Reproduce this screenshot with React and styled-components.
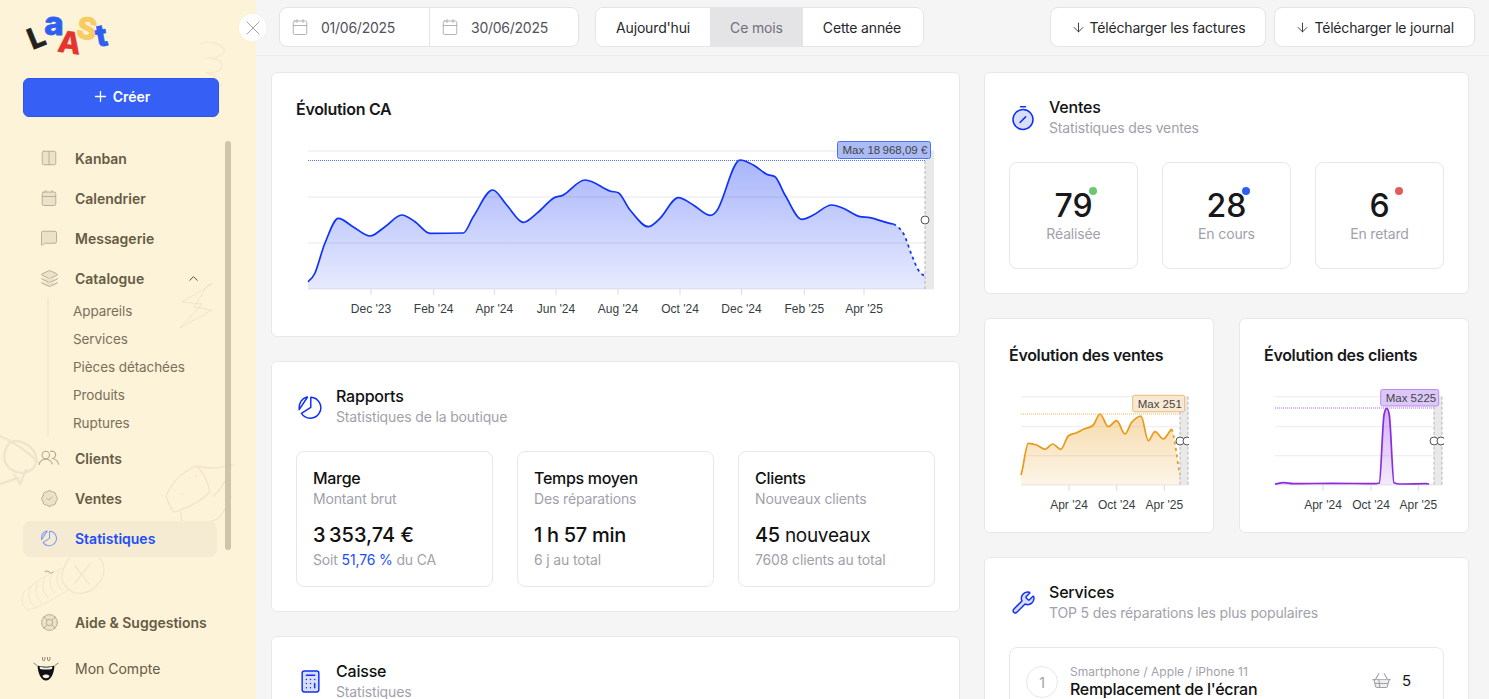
import React from "react";
import styled, { createGlobalStyle } from "styled-components";
import {
  ArrowDown, Calendar, ChevronUp, Columns2, Layers, LifeBuoy, MessageSquare,
  Plus, ShoppingBasket, X, Wrench, Calculator, BadgeCheck,
} from "lucide-react";

const Global = createGlobalStyle`
  html, body, #root { height: 100%; margin: 0; }
  body { font-family: Inter, "Noto Sans", sans-serif; background: #f5f5f5; color: #111; letter-spacing: -.15px; -webkit-font-smoothing: antialiased; }
  * { box-sizing: border-box; }
`;

const Shell = styled.div`display: flex; height: 100vh; overflow: hidden;`;

/* ---------- sidebar ---------- */
const Sidebar = styled.aside`
  position: relative; flex: none; width: 256px; padding-left: 23px;
  background: #fdf3d9; display: flex; flex-direction: column;
`;
const Doodles = styled.svg`position: absolute; inset: 0; width: 256px; height: 699px; pointer-events: none;`;
const LogoBox = styled.div`position: relative; height: 78px;`;
const LogoSvg = styled.svg`display: block; width: 110px; height: 60px; margin: 5px 0 0 -11px; overflow: visible;`;
const CreateButton = styled.button`
  position: relative; flex: none; width: 196px; height: 39px; padding: 0 0 2px; border-radius: 6px; border: 1px solid #2c55ec;
  background: #355ff5; color: #fff; font: 600 14px Inter, sans-serif;
  display: flex; align-items: center; justify-content: center; gap: 4px;
`;
const Nav = styled.nav`
  position: relative; flex: none; width: 194px; height: 433px; margin-top: 24px; overflow: hidden;
  display: flex; flex-direction: column; gap: 4px;
`;
const Item = styled.a`
  flex: none; height: 36px; padding: 0 0 2px 16px; border-radius: 8px; display: flex; align-items: center; gap: 16px;
  font-size: 14px; letter-spacing: 0; font-weight: ${p => (p.$light ? 400 : 600)};
  color: ${p => (p.$active ? "#1d4dfa" : "#665b44")};
  background: ${p => (p.$active ? "#f5ead2" : "transparent")};
`;
const IconSlot = styled.span`
  flex: none; width: 20px; height: 20px; display: flex; align-items: center; justify-content: center; color: #b5a98f;
  svg { flex: none; }
`;
const Chevron = styled.span`margin-left: auto; margin-right: 16px; display: flex; color: #5a5039;`;
const SubList = styled.div`
  margin: 0 0 0 24px; padding-left: 24px; border-left: 2px solid #f6ebd0; display: flex; flex-direction: column;
`;
const SubItem = styled.a`height: 28px; line-height: 28px; font-size: 13.5px; letter-spacing: -.08px; color: #7b705a; white-space: nowrap;`;
const Group = styled.div`flex: none;`;
const Foot = styled.div`position: relative; width: 194px; margin-top: 31px; display: flex; flex-direction: column; gap: 10px;`;
const Thumb = styled.div`position: absolute; left: 225px; top: 141px; width: 6px; height: 409px; border-radius: 3px; background: #cfc5ae;`;
const CloseButton = styled.button`
  position: absolute; right: -10px; top: 14px; width: 27px; height: 27px; border: 0; border-radius: 50%; padding: 0;
  background: #fff; color: #a1a1aa; display: flex; align-items: center; justify-content: center; z-index: 2;
`;

/* ---------- main ---------- */
const Main = styled.div`flex: 1; min-width: 0; display: flex; flex-direction: column;`;
const TopBar = styled.header`
  flex: none; height: 56px; padding: 7px 14px 0 23px; display: flex; align-items: flex-start; gap: 16px;
  border-bottom: 1px solid #ebebeb;
`;
const Group40 = styled.div`
  display: flex; height: 40px; background: #fff; border: 1px solid #e4e4e7; border-radius: 8px; overflow: hidden;
`;
const DateField = styled.div`
  width: ${p => p.$w}px; display: flex; align-items: center; gap: 12px; padding-left: 11px; font-size: 14px; color: #52525b;
  letter-spacing: -.25px; & + & { border-left: 1px solid #e4e4e7; }
  svg { color: #a1a1aa; }
`;
const Seg = styled.div`
  padding: 0 20px; display: flex; align-items: center; font-size: 14px;
  color: ${p => (p.$on ? "#71717a" : "#27272a")}; background: ${p => (p.$on ? "#e4e4e7" : "#fff")};
  &:last-child { padding-right: 21.500px; }
`;
const Actions = styled.div`margin-left: auto; display: flex; gap: 8px;`;
const ToolButton = styled.button`
  height: 40px; padding: 0 20px; background: #fff; border: 1px solid #e4e4e7; border-radius: 8px; color: #27272a;
  font: 400 14px Inter, sans-serif; letter-spacing: -.17px; display: flex; align-items: center; gap: 4px;
`;
const Content = styled.main`
  flex: 1; min-height: 0; overflow: hidden; padding: 16px 20px 0 15px; display: grid;
  grid-template-columns: 689px 485px; gap: 24px; align-items: start;
`;
const Column = styled.div`display: flex; flex-direction: column; gap: 24px;`;
const Card = styled.section`
  background: #fff; border: 1px solid #e8e8e8; border-radius: 6px; padding: 24px; 
`;
const ChartCard = styled(Card)`padding-bottom: 16px; min-width: 0;`;
const ChartTitle = styled.h2`margin: 0; font-size: 16px; line-height: 24px; font-weight: 600; letter-spacing: -.3px; color: #18181b; white-space: nowrap;`;
const ChartSvg = styled.svg`display: block; margin-top: ${p => p.$mt}px; overflow: hidden; letter-spacing: 0;`;
const CardHead = styled.div`display: flex; align-items: center; gap: 12px;`;
const HeadIcon = styled.span`flex: none; width: 28px; display: flex; justify-content: center; color: #0f2ff8;`;
const HeadTitle = styled.div`font-size: 16px; line-height: 20px; font-weight: 500; letter-spacing: -.2px; color: #111;`;
const HeadSub = styled.div`margin-top: 1px; font-size: 14px; line-height: 20px; color: #a1a1aa;`;
const Row3 = styled.div`margin-top: 24px; display: grid; grid-template-columns: repeat(3, 1fr); gap: 24px;`;
const Tile = styled.div`border: 1px solid #e8e8e8; border-radius: 8px; padding: 16px;`;
const TileTitle = styled.div`font-size: 16px; line-height: 20px; font-weight: 500; letter-spacing: -.3px; color: #111;`;
const Muted = styled.div`font-size: 14px; line-height: 20px; margin-top: 1px; color: #a1a1aa;`;
const TileValue = styled.div`
  height: 28px; margin-top: 12px; font-size: 20px; line-height: 28px; font-weight: 500; letter-spacing: -.3px; color: #111;
  span { font-size: 19px; line-height: 1; font-weight: 400; }
`;
const Blue = styled.span`color: #1d4dfa;`;
const StatTile = styled.div`
  position: relative; height: 107px; border: 1px solid #e8e8e8; border-radius: 8px; padding-top: 23px; text-align: center;
`;
const StatNumber = styled.div`font-size: 32px; line-height: 40px; font-weight: 500; letter-spacing: 0; color: #18181b;`;
const StatLabel = styled.div`margin-top: -2px; font-size: 14px; line-height: 20px; color: #a1a1aa;`;
const Dot = styled.i`position: absolute; left: 79px; top: 24px; width: 8px; height: 8px; border-radius: 50%; background: ${p => p.$c};`;
const Pair = styled.div`display: grid; grid-template-columns: 230px 230px; column-gap: 25px;`;
const ServiceRow = styled.div`
  margin-top: 24px; border: 1px solid #e8e8e8; border-radius: 8px; padding: 16px; display: flex; align-items: flex-start; gap: 12px;
`;
const Rank = styled.div`
  flex: none; width: 32px; height: 32px; margin-top: 2px; border: 1px solid #e8e8e8; border-radius: 50%;
  display: flex; align-items: center; justify-content: center; font-size: 14px; color: #a1a1aa;
`;
const ServiceMeta = styled.div`font-size: 12px; line-height: 16px; letter-spacing: .05px; color: #a1a1aa;`;
const ServiceName = styled.div`margin-top: -1px; font-size: 16px; line-height: 20px; font-weight: 500; letter-spacing: -.3px; color: #111;`;
const ServiceCount = styled.div`
  margin: 6px 0 0 auto; padding-right: 16px; display: flex; align-items: center; gap: 10px; font-size: 15px; color: #18181b;
  svg { color: #a1a1aa; }
`;

/* ---------- drawings ---------- */
const iconFill = "#ece2ca";

const PieIcon = ({ size = 20, color = "currentColor", fill = "none", sw = 1.4 }) => (
  <svg width={size} height={size} viewBox="0 0 24 24" fill="none" stroke={color} strokeWidth={sw} strokeLinejoin="round" strokeLinecap="round">
    <path d="M2.6 14.4 10.2 3a.4.4 0 0 0-.5-.3C5 4 2 8.6 2.6 14.4Z" fill={fill} transform="translate(-.6 0)" />
    <path d="M12.5 2.6A10 10 0 1 1 3.6 18l8.9-5.6Z" transform="translate(.6 .4) scale(.97)" />
  </svg>
);

const StopwatchIcon = () => (
  <svg width="24" height="26" viewBox="0 0 24 26" fill="none" stroke="currentColor" strokeWidth="1.5" strokeLinecap="round">
    <path d="M9.5 1.8h5" />
    <circle cx="12" cy="14.5" r="10" fill="#d9dffb" />
    <path d="M9 17.5l5.6-5.6" />
  </svg>
);

const TwoHeads = () => (
  <svg width="22" height="20" viewBox="0 0 22 20" fill="none" stroke="currentColor" strokeWidth="1.100" strokeLinecap="round">
    <circle cx="7.800" cy="7" r="3.700" />
    <path d="M1 16.500c1-3.500 3.500-5.300 6.800-5.300 3 0 5.400 1.600 6.500 4.800" />
    <path d="M12.500 3.400a3.700 3.700 0 1 1 1.600 7.100" />
    <path d="M16 11.300c2.300.6 3.900 2.400 4.700 5" />
  </svg>
);

const ClippedGlyph = () => (
  <svg width="20" height="20" viewBox="0 0 20 20" fill="none" stroke="currentColor" strokeWidth="1.100" strokeLinecap="round">
    <path d="M6 4c1.300-1.400 2.700-1.400 4 0s2.700 1.400 4 0" />
  </svg>
);

const Avatar = () => (
  <svg width="28" height="28" viewBox="0 0 28 28" style={{ marginLeft: -6 }}>
    <path d="M1.500 9c1 .4 2 1.300 3.500 2.500M26.500 9c-1 .4-2 1.300-3.500 2.500" fill="none" stroke="#5f5849" strokeWidth=".7" />
    <path d="M10.500 3v2.400a1.200 1.200 0 0 0 2.400 0V3M15.500 3v2.400a1.200 1.200 0 0 0 2.400 0V3" fill="none" stroke="#5f5849" strokeWidth=".7" />
    <path d="M5.500 11.500c4 1.600 13 1.600 17 0-.5 8-3.500 15-8.500 15s-8-7-8.500-15Z" fill="#111" />
    <path d="M7.500 12.800c3.500 1 9.500 1 13 0l-.6 2.200c-3.500.8-8.300.8-11.800 0Z" fill="#eee" />
    <path d="M10.500 22c1.500-2 5.500-2 7 0-.8 3-6.200 3-7 0Z" fill="#f5f1e6" />
  </svg>
);

function smooth(pts) {
  const n = pts.length;
  const slope = (a, b) => (b[1] - a[1]) / (b[0] - a[0]);
  const m = [];
  for (let i = 0; i < n; i++) {
    if (i === 0) m.push(slope(pts[0], pts[1]) * 0.6);
    else if (i === n - 1) m.push(slope(pts[n - 2], pts[n - 1]) * 0.6);
    else {
      const s0 = slope(pts[i - 1], pts[i]), s1 = slope(pts[i], pts[i + 1]);
      if (s0 * s1 <= 0) m.push(0);
      else {
        const c = slope(pts[i - 1], pts[i + 1]);
        const lim = 2.2 * Math.min(Math.abs(s0), Math.abs(s1));
        m.push(Math.sign(c) * Math.min(Math.abs(c), lim));
      }
    }
  }
  let d = `M${pts[0][0]} ${pts[0][1]}`;
  for (let i = 0; i < n - 1; i++) {
    const dx = (pts[i + 1][0] - pts[i][0]) / 3;
    d += `C${pts[i][0] + dx} ${pts[i][1] + m[i] * dx} ${pts[i + 1][0] - dx} ${pts[i + 1][1] - m[i + 1] * dx} ${pts[i + 1][0]} ${pts[i + 1][1]}`;
  }
  return d;
}

function Chart({ id, box, mt, left, right, shadeTo, grid, pts, split, color, tag, maxY, ticks, circles, labelY, dash2 }) {
  const [, , vw, vh] = box;
  const base = grid[grid.length - 1];
  const solid = pts.slice(0, split + 1);
  const dashed = pts.slice(split);
  return (
    <ChartSvg $mt={mt} width={vw} height={vh} viewBox={box.join(" ")}>
      <defs>
        <linearGradient id={id} x1="0" y1="0" x2="0" y2="1">
          <stop offset="0" stopColor={color} stopOpacity=".36" />
          <stop offset="1" stopColor={color} stopOpacity=".1" />
        </linearGradient>
      </defs>
      {grid.map(y => <line key={y} x1={left} x2={shadeTo} y1={y} y2={y} stroke="#efefef" strokeWidth="1.3" />)}
      <rect x={right} y={grid[0]} width={shadeTo - right} height={base - grid[0]} fill="#e9e9e9" />
      <line x1={left} x2={right} y1={maxY} y2={maxY} stroke={color} strokeOpacity=".7" strokeWidth="1" strokeDasharray="1 1" />
      <path d={`${smooth(pts)}L${right} ${base}L${left} ${base}Z`} fill={`url(#${id})`} />
      <path d={smooth(solid)} fill="none" stroke={color} strokeWidth="1.700" />
      <path d={smooth(dashed)} fill="none" stroke={color} strokeWidth="1.700" strokeDasharray="3 3.500" />
      <line x1={right} x2={right} y1={grid[0]} y2={base + 1} stroke="#b5b5b5" strokeWidth="1" strokeDasharray="3 2" />
      {dash2 && <line x1={shadeTo} x2={shadeTo} y1={grid[0]} y2={base + 1} stroke="#b5b5b5" strokeWidth="1" strokeDasharray="3 2" />}
      {ticks.map(([x, t]) => (
        <g key={t}>
          <line x1={x} x2={x} y1={base} y2={base + 6} stroke="#dcdcdc" />
          <text x={x} y={labelY} textAnchor="middle" fontFamily="'Liberation Sans', sans-serif" fontSize="12" fill="#373d3f">{t}</text>
        </g>
      ))}
      <rect x={tag.x} y={tag.y} width={tag.w} height={tag.h} rx="2" fill={tag.fill} stroke={tag.stroke} />
      <text x={tag.x + 5} y={tag.y + tag.h / 2 + 4} fontFamily="'Liberation Sans', sans-serif" fontSize="11.500" fill="#444">{tag.text}</text>
      {circles.map(c => <circle key={c} cx={c} cy={tag.cy} r="4" fill="#fff" stroke="#555" strokeWidth="1" />)}
    </ChartSvg>
  );
}

const caPts = [[308,281.7],[315,273],[325,243],[338.3,218.3],[353,226.7],[370,236],[385,226.7],[401.7,215],[415,221.7],[430,233.3],[463.3,233],[473.3,216.7],[492.7,190],[506.7,205],[523.3,222.3],[536.7,213.3],[553.3,198.3],[563.3,195],[585,180],[610,191],[618.3,192.7],[630,210],[648.3,226.7],[660,218.3],[678.3,197.7],[693.3,205],[710,215.3],[718.3,208.3],[740,160],[753.3,165],[766.7,174.3],[775,176.7],[785,195],[801.7,219.3],[813.3,215],[831.7,205],[843.3,208.3],[860,216.7],[870,217.7],[893.3,224],[903.3,233.3],[911.7,255],[918.3,270],[925,276]];
const z = a => a.map(([x, y]) => [+(1000 + x / 3).toFixed(1), +(340 + y / 3).toFixed(1)]);
const salesPts = z([[63,405],[85,310],[110,315],[135,328],[158,312],[182,328],[205,288],[230,278],[250,268],[280,255],[300,222],[325,260],[350,242],[375,282],[395,247],[423,228],[445,302],[465,275],[490,297],[515,267],[525,310],[540,405]]);
const clientPts = z([[825,432],[850,428],[880,431],[1000,430],[1125,431],[1138,429],[1152,225],[1160,205],[1168,225],[1182,428],[1200,432],[1278,431],[1295,433]]);

const navTop = [
  ["Kanban", <Columns2 size={18} strokeWidth={1.2} fill={iconFill} />],
  ["Calendrier", <Calendar size={18} strokeWidth={1.2} fill={iconFill} />],
  ["Messagerie", <MessageSquare size={18} strokeWidth={1.2} fill={iconFill} />],
];
const subs = ["Appareils", "Services", "Pièces détachées", "Produits", "Ruptures"];

export default function App() {
  return (
    <Shell>
      <Global />
      <Sidebar>
        <Doodles viewBox="0 0 256 699" fill="none" stroke="#f5ead0" strokeWidth="1.300" strokeLinejoin="round" strokeLinecap="round">
          <path d="M200 44c10-4 22 0 24 6s-12 8-16 8 14-1 14 7-14 8-16 8 12 1 12 8-10 9-18 8M198 90c10 2 20 0 24-6" />
          <path d="M212 284l-30 18 20 2-22 24 32-18-18-3 14-22Z" strokeWidth="1" stroke="#f0e4c8" />
          <path d="M0 436c14 6 28 16 38 26M10 442c-8 10-8 22 2 28s22 2 24-8-10-24-26-20ZM14 474l6 10 6-14M0 484c6-2 12-4 18-6" stroke="#efe5cd" strokeWidth="2.400" />
          <path d="M166 496c6-14 16-24 30-30 8 6 12 16 14 26-10 10-22 16-36 20-4-4-6-10-8-16ZM196 466c10 2 22 4 36 -2-4 14-10 24-18 32M181 512c0 6 1 10 2 14 12-2 26-2 36-8 6-8 10-16 12-22M183 494h.01M196 476h.01" stroke="#f0e5cb" />
          <path d="M64 568a22 22 0 0 1 32-14 20 20 0 0 1 2 30c-8 10-22 12-28 6-8-6-10-14-6-22ZM75 566l14 18M90 564l-16 20" stroke="#f2e7cf" />
          <path d="M64 568c-14 4-30 14-40 24M68 590c-12 8-26 16-40 20M24 592c-4 8-2 14 4 18M31 587c-4 8-2 14 3 19M38 582c-4 8-2 14 3 20M45 578c-4 8-2 14 3 20M52 574c-4 8-2 14 3 19M59 571c-4 8-2 14 3 19" stroke="#f2e7cf" strokeWidth="1" />
        </Doodles>
        <LogoBox>
          <LogoSvg viewBox="10 5 110 60" fontFamily="Inter, sans-serif" fontWeight="800" strokeLinejoin="round">
            <text transform="translate(38 47) rotate(-22)" textAnchor="middle" fontSize="29" fill="#222" stroke="#222" strokeWidth=".4">L</text>
            <text x="52" y="35" textAnchor="middle" fontSize="33" fill="#2f5ff0" stroke="#2f5ff0" strokeWidth=".8">a</text>
            <text transform="translate(66 53) rotate(8)" textAnchor="middle" fontSize="30" fill="#e5342f" stroke="#e5342f" strokeWidth=".3">A</text>
            <text transform="translate(83 39) rotate(10)" textAnchor="middle" fontSize="30" fill="#f7cc62" stroke="#f7cc62" strokeWidth=".8">S</text>
            <text transform="translate(101 46) rotate(-10)" textAnchor="middle" fontSize="30" fill="#2f5ff0" stroke="#2f5ff0" strokeWidth=".8">t</text>
          </LogoSvg>
        </LogoBox>
        <CreateButton><Plus size={17} strokeWidth={1.800} />Créer</CreateButton>
        <Nav>
          {navTop.map(([t, ic]) => <Item key={t}><IconSlot>{ic}</IconSlot>{t}</Item>)}
          <Group>
            <Item>
              <IconSlot><Layers size={19} strokeWidth={1.200} fill={iconFill} /></IconSlot>Catalogue
              <Chevron><ChevronUp size={15} strokeWidth={1.600} /></Chevron>
            </Item>
            <SubList>{subs.map(s => <SubItem key={s}>{s}</SubItem>)}</SubList>
          </Group>
          <Item><IconSlot><TwoHeads /></IconSlot>Clients</Item>
          <Item><IconSlot><BadgeCheck size={19} strokeWidth={1.200} fill={iconFill} /></IconSlot>Ventes</Item>
          <Item $active><IconSlot><PieIcon size={18} color="#7f9af5" fill="#cfd6f0" /></IconSlot>Statistiques</Item>
          <Item><IconSlot><ClippedGlyph /></IconSlot></Item>
        </Nav>
        <Foot>
          <Item><IconSlot><LifeBuoy size={19} strokeWidth={1.200} fill={iconFill} /></IconSlot>Aide &amp; Suggestions</Item>
          <Item $light><IconSlot><Avatar /></IconSlot>Mon Compte</Item>
        </Foot>
        <Thumb />
        <CloseButton><X size={24} strokeWidth={1} /></CloseButton>
      </Sidebar>

      <Main>
        <TopBar>
          <Group40>
            <DateField $w={149}><Calendar size={18} strokeWidth={1.100} />01/06/2025</DateField>
            <DateField $w={149}><Calendar size={18} strokeWidth={1.100} />30/06/2025</DateField>
          </Group40>
          <Group40>
            <Seg>Aujourd'hui</Seg>
            <Seg $on>Ce mois</Seg>
            <Seg>Cette année</Seg>
          </Group40>
          <Actions>
            <ToolButton><ArrowDown size={15} strokeWidth={1.400} />Télécharger les factures</ToolButton>
            <ToolButton><ArrowDown size={15} strokeWidth={1.400} />Télécharger le journal</ToolButton>
          </Actions>
        </TopBar>

        <Content>
          <Column>
            <ChartCard>
              <ChartTitle>Évolution CA</ChartTitle>
              <Chart
                id="ca" box={[296, 140, 640, 180]} mt={19} left={308} right={925} shadeTo={934}
                grid={[151, 197, 243, 289]} pts={caPts} split={39} color="#1033f5" maxY={160.5} labelY={313}
                ticks={[[371,"Dec '23"],[433.7,"Feb '24"],[494.3,"Apr '24"],[556,"Jun '24"],[618,"Aug '24"],[680,"Oct '24"],[741.5,"Dec '24"],[804.3,"Feb '25"],[864,"Apr '25"]]}
                tag={{ x: 837.5, y: 141.5, w: 93, h: 17, fill: "#aabbf5", stroke: "#4f72ee", text: "Max 18\u202f968,09 €", cy: 220 }}
                circles={[925]}
              />
            </ChartCard>

            <Card>
              <CardHead>
                <HeadIcon><PieIcon size={26} /></HeadIcon>
                <div><HeadTitle>Rapports</HeadTitle><HeadSub>Statistiques de la boutique</HeadSub></div>
              </CardHead>
              <Row3>
                <Tile>
                  <TileTitle>Marge</TileTitle><Muted>Montant brut</Muted>
                  <TileValue>3{"\u202f"}353,74 €</TileValue>
                  <Muted>Soit <Blue>51,76 %</Blue> du CA</Muted>
                </Tile>
                <Tile>
                  <TileTitle>Temps moyen</TileTitle><Muted>Des réparations</Muted>
                  <TileValue>1 h 57 min</TileValue>
                  <Muted>6 j au total</Muted>
                </Tile>
                <Tile>
                  <TileTitle>Clients</TileTitle><Muted>Nouveaux clients</Muted>
                  <TileValue>45 <span>nouveaux</span></TileValue>
                  <Muted>7608 clients au total</Muted>
                </Tile>
              </Row3>
            </Card>

            <Card>
              <CardHead>
                <HeadIcon><Calculator size={25} strokeWidth={1.400} fill="#d9dffb" /></HeadIcon>
                <div><HeadTitle>Caisse</HeadTitle><HeadSub>Statistiques</HeadSub></div>
              </CardHead>
            </Card>
          </Column>

          <Column>
            <Card>
              <CardHead>
                <HeadIcon><StopwatchIcon /></HeadIcon>
                <div><HeadTitle>Ventes</HeadTitle><HeadSub>Statistiques des ventes</HeadSub></div>
              </CardHead>
              <Row3>
                <StatTile><Dot $c="#6cc76f" /><StatNumber>79</StatNumber><StatLabel>Réalisée</StatLabel></StatTile>
                <StatTile><Dot $c="#2f5ef5" /><StatNumber>28</StatNumber><StatLabel>En cours</StatLabel></StatTile>
                <StatTile><Dot $c="#e25c5c" /><StatNumber>6</StatNumber><StatLabel>En retard</StatLabel></StatTile>
              </Row3>
            </Card>

            <Pair>
              <ChartCard>
                <ChartTitle>Évolution des ventes</ChartTitle>
                <Chart
                  id="sales" box={[1009, 385, 180, 131]} mt={18} left={1021} right={1180} shadeTo={1188} dash2
                  grid={[396.7, 426.7, 455.7, 485]} pts={salesPts} split={19} color="#e89a18" maxY={414} labelY={509}
                  ticks={[[1069,"Apr '24"],[1116.7,"Oct '24"],[1164.3,"Apr '25"]]}
                  tag={{ x: 1132.7, y: 395.3, w: 52, h: 16.500, fill: "#f9e9d2", stroke: "#ecb97a", text: "Max 251", cy: 441 }}
                  circles={[1180, 1187]}
                />
              </ChartCard>
              <ChartCard>
                <ChartTitle>Évolution des clients</ChartTitle>
                <Chart
                  id="clients" box={[1264, 385, 180, 131]} mt={18} left={1275} right={1434} shadeTo={1442} dash2
                  grid={[396.7, 426.7, 455.7, 485]} pts={clientPts} split={11} color="#8a2be2" maxY={408} labelY={509}
                  ticks={[[1323,"Apr '24"],[1371,"Oct '24"],[1418.300,"Apr '25"]]}
                  tag={{ x: 1380.700, y: 389.500, w: 58, h: 16.500, fill: "#dcc8f8", stroke: "#b98af0", text: "Max 5225", cy: 441 }}
                  circles={[1434, 1441]}
                />
              </ChartCard>
            </Pair>

            <Card>
              <CardHead>
                <HeadIcon><Wrench size={25} strokeWidth={1.400} fill="#d9dffb" /></HeadIcon>
                <div><HeadTitle>Services</HeadTitle><HeadSub>TOP 5 des réparations les plus populaires</HeadSub></div>
              </CardHead>
              <ServiceRow>
                <Rank>1</Rank>
                <div>
                  <ServiceMeta>Smartphone / Apple / iPhone 11</ServiceMeta>
                  <ServiceName>Remplacement de l'écran</ServiceName>
                </div>
                <ServiceCount><ShoppingBasket size={21} strokeWidth={1.200} fill="#eeeeef" />5</ServiceCount>
              </ServiceRow>
            </Card>
          </Column>
        </Content>
      </Main>
    </Shell>
  );
}
